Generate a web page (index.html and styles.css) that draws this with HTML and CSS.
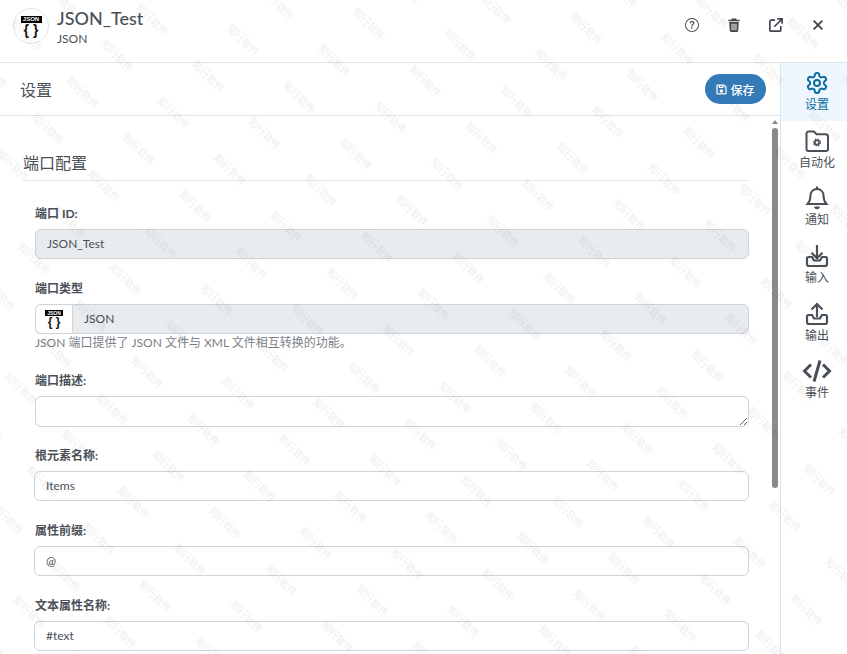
FILE: index.html
```html
<!DOCTYPE html>
<html lang="zh">
<head>
<meta charset="utf-8">
<title>JSON_Test</title>
<link rel="stylesheet" href="styles.css">
</head>
<body>
<div class="app">
  <header class="top">
    <div class="logo"><span class="logo-tag">JSON</span><span class="logo-br">{ }</span></div>
    <div class="names">
      <div class="name">JSON_Test</div>
      <div class="kind">JSON</div>
    </div>
    <div class="actions">
      <svg class="act" viewBox="0 0 16 16" fill="currentColor"><path d="M8 15A7 7 0 1 1 8 1a7 7 0 0 1 0 14zm0 1A8 8 0 1 0 8 0a8 8 0 0 0 0 16z"/><path d="M5.255 5.786a.237.237 0 0 0 .241.247h.825c.138 0 .248-.113.266-.25.09-.656.54-1.134 1.342-1.134.686 0 1.314.343 1.314 1.168 0 .635-.374.927-.965 1.371-.673.489-1.206 1.06-1.168 1.987l.003.217a.25.25 0 0 0 .25.246h.811a.25.25 0 0 0 .25-.25v-.105c0-.718.273-.927 1.01-1.486.609-.463 1.244-.977 1.244-2.056 0-1.511-1.276-2.241-2.673-2.241-1.267 0-2.655.59-2.75 2.286zm1.557 5.763c0 .533.425.927 1.01.927.609 0 1.028-.394 1.028-.927 0-.552-.42-.94-1.029-.94-.584 0-1.009.388-1.009.94z"/></svg>
      <svg class="act" viewBox="0 0 16 16" fill="currentColor"><path d="M5.500 0.500h5l.7 1.500H14.500v1.700H1.500V2h3.300z"/><path fill-rule="evenodd" d="M2.500 4.700h11l-.7 10a1.300 1.300 0 0 1-1.300 1.200h-7a1.300 1.300 0 0 1-1.300-1.200zM5.200 6.500v7.500h1.100V6.500zM7.450 6.500v7.500h1.100V6.500zM9.700 6.500v7.500h1.100V6.500z"/></svg>
      <svg class="act" viewBox="0 0 16 16" fill="none" stroke="currentColor" stroke-width="1.900"><path d="M7 2.500H2.200a1.200 1.200 0 0 0-1.200 1.200v10.100a1.200 1.200 0 0 0 1.200 1.200h10.100a1.200 1.200 0 0 0 1.200-1.200V9"/><path d="M6 10L14.500 1.500M9.500 1h5.500v5.500"/></svg>
      <svg class="act" viewBox="0 0 16 16" fill="none" stroke="currentColor" stroke-width="2.200"><path d="M3 3l10 10M13 3L3 13"/></svg>
    </div>
  </header>
  <div class="body">
    <main class="main">
      <div class="bar">
        <span class="bar-title">设置</span>
        <button class="save" type="button">
          <svg class="save-ico" viewBox="0 0 16 16" fill="none" stroke="currentColor" stroke-width="1.800"><path d="M2.500 1.500h9l3 3v9a1 1 0 0 1-1 1h-11a1 1 0 0 1-1-1v-11a1 1 0 0 1 1-1z"/><path d="M5 2v3h5V2"/><circle cx="8" cy="10.300" r="1.700" fill="currentColor"/></svg>
          <span>保存</span>
        </button>
      </div>
      <div class="scroll">
        <h2 class="section">端口配置</h2>
        <div class="fields">
          <div class="field">
            <label class="lab">端口 ID:</label>
            <div class="ctl ctl-off">JSON_Test</div>
          </div>
          <div class="field">
            <label class="lab">端口类型</label>
            <div class="group">
              <div class="addon"><span class="logo-tag logo-tag-s">JSON</span><span class="logo-br logo-br-s">{ }</span></div>
              <div class="ctl ctl-off ctl-joined">JSON</div>
            </div>
            <div class="help">JSON 端口提供了 JSON 文件与 XML 文件相互转换的功能。</div>
          </div>
          <div class="field field-tight">
            <label class="lab">端口描述:</label>
            <textarea class="ctl area"></textarea>
          </div>
          <div class="field">
            <label class="lab">根元素名称:</label>
            <div class="ctl ctl-wide">Items</div>
          </div>
          <div class="field">
            <label class="lab">属性前缀:</label>
            <div class="ctl ctl-wide">@</div>
          </div>
          <div class="field">
            <label class="lab">文本属性名称:</label>
            <div class="ctl ctl-wide">#text</div>
          </div>
        </div>
      </div>
    </main>
    <nav class="side">
      <a class="tab tab-on">
        <svg class="tab-ico" viewBox="0 0 24 24" fill="none" stroke="currentColor" stroke-width="2"><path d="M12.220 2h-.44a2 2 0 0 0-2 2v.18a2 2 0 0 1-1 1.730l-.43.25a2 2 0 0 1-2 0l-.15-.08a2 2 0 0 0-2.730.73l-.22.38a2 2 0 0 0 .73 2.730l.15.1a2 2 0 0 1 1 1.720v.51a2 2 0 0 1-1 1.740l-.15.09a2 2 0 0 0-.73 2.730l.22.38a2 2 0 0 0 2.730.73l.15-.08a2 2 0 0 1 2 0l.43.25a2 2 0 0 1 1 1.730V20a2 2 0 0 0 2 2h.44a2 2 0 0 0 2-2v-.18a2 2 0 0 1 1-1.730l.43-.25a2 2 0 0 1 2 0l.15.08a2 2 0 0 0 2.730-.73l.22-.39a2 2 0 0 0-.73-2.730l-.15-.08a2 2 0 0 1-1-1.740v-.5a2 2 0 0 1 1-1.740l.15-.09a2 2 0 0 0 .73-2.730l-.22-.38a2 2 0 0 0-2.730-.73l-.15.08a2 2 0 0 1-2 0l-.43-.25a2 2 0 0 1-1-1.730V4a2 2 0 0 0-2-2z"/><circle cx="12" cy="12" r="3"/></svg>
        <span>设置</span>
      </a>
      <a class="tab">
        <svg class="tab-ico" viewBox="0 0 24 24" fill="none" stroke="currentColor" stroke-width="2"><path d="M1.500 4.500a2 2 0 0 1 2-2h5.500l2.500 2.700H20.500a2.500 2.500 0 0 1 2.500 2.500V20a2 2 0 0 1-2 2H3.500a2 2 0 0 1-2-2z"/><circle cx="12" cy="13.500" r="3.300" stroke-width="1.500" stroke-dasharray="1.500 1.090"/><circle cx="12" cy="13.500" r="2.100" stroke-width="1.700"/></svg>
        <span>自动化</span>
      </a>
      <a class="tab">
        <svg class="tab-ico" viewBox="0 0 24 24" fill="none" stroke="currentColor" stroke-width="2"><path d="M12 3c-3.900 0-6.500 2.900-6.500 6.500 0 5-1.200 6.500-3 8.500h19c-1.800-2-3-3.500-3-8.500C18.500 5.900 15.900 3 12 3z"/><path d="M12 .5v2.500"/><path d="M9.500 21a2.600 2.600 0 0 0 5 0z" fill="currentColor" stroke-width="1"/></svg>
        <span>通知</span>
      </a>
      <a class="tab">
        <svg class="tab-ico" viewBox="0 0 24 24" fill="none" stroke="currentColor" stroke-width="2.200"><path d="M12 1v13M6.500 8.800L12 14.300l5.500-5.500"/><path d="M7 13H3.500a1.500 1.500 0 0 0-1.500 1.500V20a2 2 0 0 0 2 2h16a2 2 0 0 0 2-2v-5.500a1.500 1.500 0 0 0-1.500-1.500H17l-2 3.500H9z"/></svg>
        <span>输入</span>
      </a>
      <a class="tab">
        <svg class="tab-ico" viewBox="0 0 24 24" fill="none" stroke="currentColor" stroke-width="2.200"><path d="M12 15V2M6.500 7.500L12 2l5.500 5.500"/><path d="M7 13H3.500a1.500 1.500 0 0 0-1.500 1.500V20a2 2 0 0 0 2 2h16a2 2 0 0 0 2-2v-5.500a1.500 1.500 0 0 0-1.500-1.500H17l-2 3.500H9z"/></svg>
        <span>输出</span>
      </a>
      <a class="tab">
        <svg class="tab-ico tab-ico-w" viewBox="0 0 30 24" fill="none" stroke="currentColor" stroke-width="3"><path d="M9 5.500L2.500 12 9 18.500M21 5.500l6.500 6.500L21 18.500M18 1.500L12 22.500"/></svg>
        <span>事件</span>
      </a>
    </nav>
  </div>
  <div class="sb-up"></div>
  <div class="sb-thumb"></div>
  <svg class="mark" width="847" height="654">
    <defs>
      <pattern id="wm" patternUnits="userSpaceOnUse" width="80" height="50" patternTransform="matrix(.704 .7125 -.696 .729 661.240 356.300)">
        <text class="mark-t" x="40" y="28.500" text-anchor="middle">知行软件</text>
      </pattern>
    </defs>
    <rect width="847" height="654" fill="url(#wm)"/>
  </svg>
</div>
</body>
</html>
```
FILE: styles.css
```css
* { box-sizing: border-box; }
html, body { margin: 0; padding: 0; height: 100%; overflow: hidden; background: #fff; }
body { font-family: Lato, "Noto Sans CJK SC", sans-serif; color: #4a5058; font-size: 12px; }
.app { position: relative; width: 847px; height: 654px; display: flex; flex-direction: column; overflow: hidden; }

.top { height: 63px; flex: none; border-bottom: 1px solid #dee5ea; display: flex; align-items: center; padding: 0 0 10px 13px; }
.logo { width: 36px; height: 36px; border-radius: 50%; border: 1px solid #e2e6ea; display: flex; flex-direction: column; align-items: center; justify-content: center; flex: none; }
.logo-tag { background: #000; color: #fff; font: 700 6px/7px "Liberation Sans", sans-serif; padding: 0 1px; width: 21px; text-align: center; }
.logo-br { color: #111; font: 700 14px/14px "Liberation Sans", sans-serif; }
.names { margin-left: 8px; padding-top: 2px; }
.name { font-size: 18px; line-height: 22px; color: #4a5058; font-weight: 500; }
.kind { font-size: 12px; line-height: 16px; margin-top: 2px; }
.actions { margin-left: auto; align-self: flex-start; display: flex; gap: 28px; padding: 18px 22px 0 0; color: #42474d; }
.act { width: 14px; height: 14px; display: block; }

.body { flex: 1; display: flex; min-height: 0; }
.main { flex: 1; min-width: 0; display: flex; flex-direction: column; border-right: 1px solid #dee5ea; }
.bar { height: 53px; flex: none; display: flex; align-items: center; justify-content: space-between; padding: 0 14px 0 20px; border-bottom: 1px solid #dee5ea; }
.bar-title { font-size: 16px; }
.save { height: 30px; width: 61px; border: 0; border-radius: 15px; background: #337ab7; color: #fff; font: 500 12px Lato, "Noto Sans CJK SC", sans-serif; display: flex; align-items: center; justify-content: center; gap: 3px; padding: 0; }
.save-ico { width: 11px; height: 11px; }

.scroll { flex: 1; min-height: 0; overflow: hidden; padding: 33px 31px 0 23px; }
.section { margin: 0; font-size: 16px; line-height: 28px; height: 32px; font-weight: 400; border-bottom: 1px solid #e6e9ec; }
.fields { padding: 25px 0 0 12px; }
.field { margin-bottom: 22px; }
.field-tight { margin-bottom: 21px; }
.lab { display: block; font-weight: 700; line-height: 16px; margin-bottom: 7px; }
.ctl { display: flex; align-items: center; height: 30px; width: 100%; border: 1px solid #ced4da; border-radius: 6px; padding: 0 11px 1px; background: #fff; color: #4a5058; font-size: 12px; }
.ctl-off { background: #e9ecef; }
.ctl-wide { width: calc(100% + 1px); margin-left: -1px; }
.group { display: flex; }
.addon { width: 37px; height: 30px; flex: none; border: 1px solid #ced4da; border-right: 0; border-radius: 6px 0 0 6px; background: #fff; display: flex; flex-direction: column; align-items: center; justify-content: center; }
.ctl-joined { border-radius: 0 6px 6px 0; }
.logo-tag-s { font-size: 5px; line-height: 6px; width: 18px; }
.logo-br-s { font-size: 12px; line-height: 13px; }
.help { color: #7b8189; line-height: 16px; margin-top: 1px; }
.area { height: 31px; display: block; resize: vertical; }

.side { width: 66px; flex: none; display: flex; flex-direction: column; }
.tab { height: 57.600px; display: flex; flex-direction: column; align-items: center; justify-content: center; line-height: 14px; color: #4a5058; gap: 3px; padding-left: 6px; }
.tab-on { background: #eef7fd; color: #0b6aa2; }
.tab-ico { width: 24px; height: 24px; display: block; }
.tab-ico-w { width: 30px; }

.sb-up { position: absolute; left: 772px; top: 120px; width: 0; height: 0; border: 3px solid transparent; border-top: 0; border-bottom: 4px solid #8a8a8a; }
.sb-thumb { position: absolute; left: 772px; top: 128px; width: 6px; height: 360px; border-radius: 3px; background: #8a8a8a; }
.mark { position: absolute; left: 0; top: 0; pointer-events: none; }
.mark-t { font: 10px "Noto Sans CJK SC", sans-serif; fill: rgba(0, 0, 0, .08); }
```
